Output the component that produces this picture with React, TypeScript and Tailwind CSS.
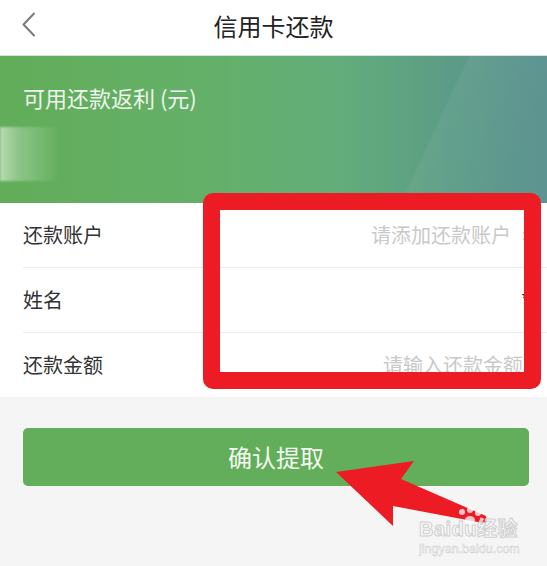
import React from "react";

const rows = [
  { label: "还款账户", value: "请添加还款账户", placeholder: true, chevron: true },
  { label: "姓名", value: "*", placeholder: false, chevron: false },
  { label: "还款金额", value: "请输入还款金额", placeholder: true, chevron: false },
];

export default function App() {
  return (
    <div className="relative w-[547px] h-[566px] overflow-hidden bg-[#f5f5f5] font-['Noto_Sans_CJK_SC',sans-serif]">
      {/* Header */}
      <header className="relative flex h-[56px] items-center justify-center border-b border-[#dedede] bg-white">
        <svg className="absolute left-[21px] top-[12px] h-[25px] w-[16px]" viewBox="0 0 16 25" fill="none">
          <path d="M13 1.5L2.5 12.5L13 23.5" stroke="#7a7a7a" strokeWidth="2" strokeLinecap="round" strokeLinejoin="round" />
        </svg>
        <h1 className="text-[24px] leading-none text-[#222] pb-[4px]">信用卡还款</h1>
      </header>

      {/* Banner */}
      <section className="relative h-[147px] overflow-hidden bg-[linear-gradient(90deg,#62ad59_0%,#64b06a_40%,#62ad7a_62%,#5c9c86_82%,#5a918f_100%)]">
        <div className="absolute inset-0 bg-[linear-gradient(115deg,transparent_0%,transparent_76%,rgba(255,255,255,0.05)_76.5%,rgba(255,255,255,0.02)_92%)]" />
        <p className="relative pl-[23px] pt-[30px] text-[22px] leading-none text-[#eef4ec]">可用还款返利 (元)</p>
        <div className="absolute left-0 top-[71px] h-[54px] w-[60px] bg-[linear-gradient(90deg,#b8dbb2_0%,#8ec588_30%,#7bbc76_60%,rgba(110,180,105,0)_100%)] blur-[1px]" />
      </section>

      {/* Form rows */}
      <section className="bg-white">
        {rows.map((r, i) => (
          <div key={r.label} className="pl-[23px]">
            <div
              className={
                "flex items-center justify-between pr-[24px] " +
                (i < 2 ? "h-[65px] border-b border-[#ececec]" : "h-[64px]")
              }
            >
              <span className="text-[20px] text-[#333]">{r.label}</span>
              <span className="flex items-center">
                <span className={r.placeholder ? "text-[20px] text-[#c9c9c9]" : "mr-[-7px] text-[20px] text-[#333]"}>{r.value}</span>
                {r.chevron && <span className="ml-[11px] mr-[-9px] text-[18px] text-[#c9c9c9]">&gt;</span>}
              </span>
            </div>
          </div>
        ))}
      </section>

      {/* Button */}
      <div className="px-[23px] pt-[31px]">
        <button className="flex h-[58px] w-[506px] items-center justify-center rounded-[5px] bg-[#63ae5b] text-[24px] text-[#f4f8f2]">
          确认提取
        </button>
      </div>

      {/* Red highlight box */}
      <div className="absolute left-[203px] top-[193px] h-[196px] w-[338px] rounded-[10px] border-[17px] border-[#ed1c24]" />

      {/* Red arrow + watermark paw */}
      <svg className="pointer-events-none absolute left-0 top-0 h-[566px] w-[547px]" viewBox="0 0 547 566">
        <polygon
          points="336,472 414,461 401,479 486,516 487,522 483,523 393,506 393,526"
          fill="#ed1c24"
        />
        <g fill="#ffffff" opacity="0.75">
          <circle cx="462" cy="512" r="3" />
          <circle cx="470" cy="510" r="3" />
          <circle cx="478" cy="513" r="3" />
          <ellipse cx="470" cy="520" rx="5" ry="4" />
        </g>
      </svg>

      {/* Baidu watermark */}
      <div className="pointer-events-none absolute left-[419px] top-[519px] flex flex-col items-start">
        <span className="text-[20px] font-bold leading-none tracking-[0.5px] text-white/70 [-webkit-text-stroke:1px_#cfcfcf] font-['Liberation_Sans','Noto_Sans_CJK_SC',sans-serif]">
          Baidu经验
        </span>
        <span className="mt-[4px] text-[12.5px] leading-none text-white/60 [-webkit-text-stroke:0.5px_#cfcfcf] font-['Liberation_Sans',sans-serif]">
          jingyan.baidu.com
        </span>
      </div>
    </div>
  );
}
